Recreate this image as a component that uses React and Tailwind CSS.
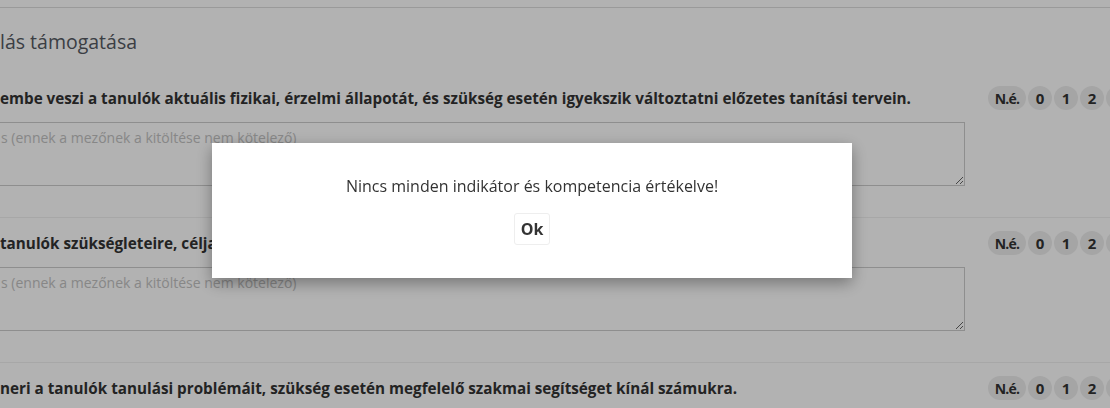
import React from 'react';

const rows = [
    'embe veszi a tanulók aktuális fizikai, érzelmi állapotát, és szükség esetén igyekszik változtatni előzetes tanítási tervein.',
    'tanulók szükségleteire, céljaira és érdeklődésére építve tervezi meg az óráit.',
    'neri a tanulók tanulási problémáit, szükség esetén megfelelő szakmai segítséget kínál számukra.'
];

const grades = ['0', '1', '2', '3'];

const IndicatorRow = ({ text }) => (
    <div className="pt-[13px] pb-[31px] border-b border-[#f0f0f0]">
        <div className="w-[1130px] flex items-center h-[24px]">
            <p className="flex-1 text-[15.25px] font-bold text-[#333] whitespace-nowrap overflow-hidden">{text}</p>
            <div className="flex shrink-0 gap-[2px]">
                <span className="h-[24px] w-[38px] rounded-full bg-[#ededed] flex items-center justify-center text-[14px] font-bold text-[#333] tracking-[-0.8px]">N.é.</span>
                {grades.map((g) => (
                    <span key={g} className="h-[24px] w-[24px] rounded-full bg-[#ededed] flex items-center justify-center text-[15px] font-bold text-[#333]">{g}</span>
                ))}
            </div>
        </div>
        <textarea
            className="block mt-[12px] -ml-[10px] w-[975px] h-[64px] border border-[#ccc] px-[10px] py-[4px] text-[14px] text-[#333] placeholder:text-[#c2c2c2] outline-none"
            placeholder="s (ennek a mezőnek a kitöltése nem kötelező)"
        />
    </div>
);

const App = () => {
    return (
        <div className="w-[1110px] h-[408px] overflow-hidden bg-white font-['Open_Sans',sans-serif] relative">
            <div className="pt-[7px]">
                <div className="border-t border-[#ddd] pt-[20px] pb-[17px]">
                    <h2 className="text-[19.5px] leading-[28px] text-[#555a62]">lás támogatása</h2>
                </div>
                {rows.map((r, i) => (
                    <IndicatorRow key={i} text={r} />
                ))}
            </div>

            <div className="fixed inset-0 bg-black/30" />

            <div className="fixed left-[212px] top-[143px] w-[640px] h-[135px] bg-white shadow-[0_5px_15px_rgba(0,0,0,0.35)] flex flex-col items-center pt-[31px]">
                <p className="text-[16px] leading-[24px] text-[#333]">Nincs minden indikátor és kompetencia értékelve!</p>
                <button className="mt-[15px] h-[32px] px-[6px] border border-[#eee] rounded-[3px] bg-white text-[16px] font-bold text-[#333]">Ok</button>
            </div>
        </div>
    );
};

export default App;
